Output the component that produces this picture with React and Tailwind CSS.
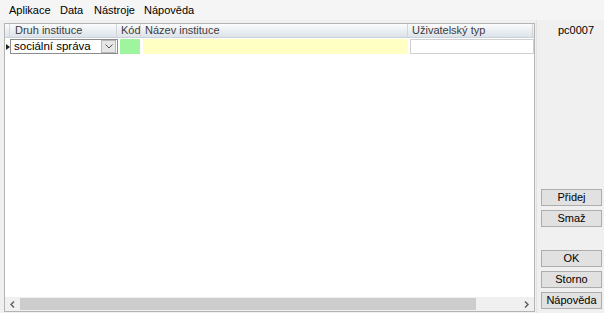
import React from 'react';

const font = { fontFamily: '"Liberation Sans", Arial, sans-serif' };

const menu = [
  { label: 'Aplikace', w: 'w-[51px]' },
  { label: 'Data', w: 'w-[34px]' },
  { label: 'Nástroje', w: 'w-[50px]' },
  { label: 'Nápověda', w: 'w-auto' },
];

const columns = [
  { label: 'Druh instituce', w: 'w-[107px]', pl: 'pl-[5px]' },
  { label: 'Kód', w: 'w-[24px]', pl: 'pl-[4px]' },
  { label: 'Název instituce', w: 'w-[267px]', pl: 'pl-[4px]' },
  { label: 'Uživatelský typ', w: 'w-[125px]', pl: 'pl-[4px]' },
];

const Button = ({ children }) => (
  <button className="h-[17px] w-[61px] bg-[#e1e1e1] border border-[#adadad] text-[11px] text-black leading-none flex items-center justify-center">
    {children}
  </button>
);

export default function App() {
  return (
    <div
      className="w-[604px] h-[313px] bg-[#f0f0f0] flex flex-col overflow-hidden text-black"
      style={font}
    >
      {/* menu */}
      <div className="h-[20px] flex items-center pl-[9px] bg-[#f5f5f5] text-[11px]">
        {menu.map((m) => (
          <span key={m.label} className={m.w}>{m.label}</span>
        ))}
      </div>

      <div className="flex-1 flex min-h-0">
        {/* grid */}
        <div className="w-[536px] pl-[4px] pt-[3px] pr-[1px] pb-[1px] flex">
          <div className="flex-1 flex flex-col bg-white border border-[#b4b4b4] min-w-0">
            <div className="h-[14px] flex bg-gradient-to-b from-[#fbfcfd] to-[#dce3ea] border-b border-[#c8d0d8] text-[11px] text-[#3c3c3c]">
              <div className="w-[5px] border-r border-[#d5d5d5]" />
              {columns.map((c) => (
                <div
                  key={c.label}
                  className={`${c.w} ${c.pl} border-r border-[#d5d5d5] leading-[13px] whitespace-nowrap overflow-hidden`}
                >
                  {c.label}
                </div>
              ))}
            </div>

            {/* row */}
            <div className="h-[17px] flex items-stretch">
              <div className="w-[5px] flex items-center justify-center">
                <svg width="4" height="6" viewBox="0 0 4 6">
                  <path d="M0 0 L4 3 L0 6 Z" fill="#222" />
                </svg>
              </div>
              <div className="w-[108px] my-[1px] border border-[#8c8c8c] bg-white flex items-center">
                <span className="flex-1 pl-[3px] text-[11.5px] leading-none whitespace-nowrap">sociální správa</span>
                <div className="w-[15px] h-[13px] mr-[1px] bg-[#e6e6e6] border border-[#b8b8b8] flex items-center justify-center">
                  <svg width="8" height="5" viewBox="0 0 8 5">
                    <path d="M0.5 0.5 L4 4 L7.5 0.5" stroke="#555" fill="none" strokeWidth="1" />
                  </svg>
                </div>
              </div>
              <div className="w-[20px] ml-[2px] my-[1px] bg-[#9ef59e]" />
              <div className="w-[265px] ml-[3px] my-[1px] bg-[#ffffc4]" />
              <div className="w-[124px] ml-[2px] my-[1px] border border-[#d0d0d0] bg-white" />
            </div>

            <div className="flex-1" />

            {/* horizontal scrollbar */}
            <div className="h-[14px] flex bg-[#f0f0f0] items-stretch">
              <div className="w-[15px] flex items-center justify-center">
                <svg width="5" height="7" viewBox="0 0 5 7">
                  <path d="M4 0.5 L1 3.5 L4 6.5" stroke="#606060" strokeWidth="1.5" fill="none" />
                </svg>
              </div>
              <div className="w-[456px] my-[1px] bg-[#cdcdcd]" />
              <div className="flex-1" />
              <div className="w-[15px] flex items-center justify-center">
                <svg width="5" height="7" viewBox="0 0 5 7">
                  <path d="M1 0.5 L4 3.5 L1 6.5" stroke="#606060" strokeWidth="1.5" fill="none" />
                </svg>
              </div>
            </div>
          </div>
        </div>

        {/* right panel */}
        <div className="flex-1 flex flex-col items-start pl-[4px] pb-[4px] border-l border-[#e3e3e3]">
          <div className="text-[11px] pl-[17px] pt-[2px]">pc0007</div>
          <div className="mt-auto flex flex-col gap-[4px]">
            <Button>Přidej</Button>
            <Button>Smaž</Button>
            <div className="h-[15px]" />
            <Button>OK</Button>
            <Button>Storno</Button>
            <Button>Nápověda</Button>
          </div>
        </div>
      </div>
    </div>
  );
}
